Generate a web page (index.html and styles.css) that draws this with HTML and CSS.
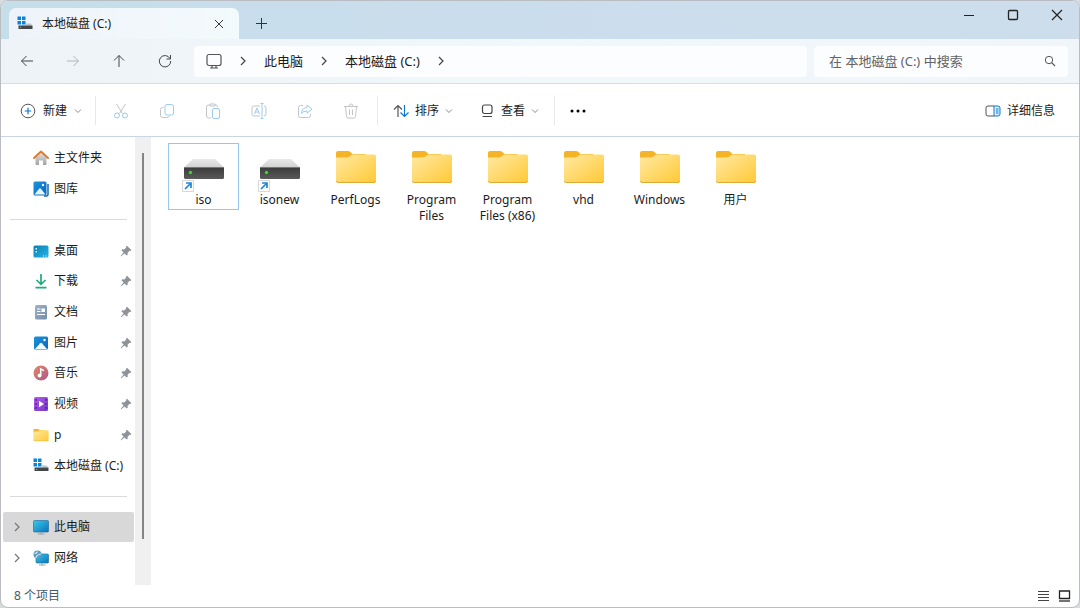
FILE: index.html
```html
<!DOCTYPE html>
<html lang="zh-CN">
<head>
<meta charset="utf-8">
<meta name="viewport" content="width=device-width, initial-scale=1">
<title>本地磁盘 (C:)</title>
<link rel="stylesheet" href="styles.css">
</head>
<body>
<svg class="sprite" aria-hidden="true">
  <defs>
    <linearGradient id="g-folder" x1="0" y1="0" x2="1" y2="1"><stop offset="0" stop-color="#ffe9a3"/><stop offset="1" stop-color="#ffc935"/></linearGradient>
    <linearGradient id="g-drive" x1="0" y1="0" x2="0" y2="1"><stop offset="0" stop-color="#3a3a3a"/><stop offset="1" stop-color="#5a5a5a"/></linearGradient>
    <linearGradient id="g-top" x1="0" y1="0" x2="0" y2="1"><stop offset="0" stop-color="#e8e8e8"/><stop offset="1" stop-color="#d2d2d2"/></linearGradient>
    <linearGradient id="g-blue" x1="0" y1="0" x2="1" y2="1"><stop offset="0" stop-color="#1b93dd"/><stop offset="1" stop-color="#0a66bb"/></linearGradient>
    <linearGradient id="g-cyan" x1="0" y1="0" x2="1" y2="1"><stop offset="0" stop-color="#35cbe8"/><stop offset="1" stop-color="#0d72bd"/></linearGradient>
    <linearGradient id="g-desk" x1="0" y1="0" x2="1" y2="1"><stop offset="0" stop-color="#0a7fb5"/><stop offset="1" stop-color="#27b5e2"/></linearGradient>
    <linearGradient id="g-doc" x1="0" y1="0" x2="1" y2="1"><stop offset="0" stop-color="#a0b3ca"/><stop offset="1" stop-color="#718cab"/></linearGradient>
    <linearGradient id="g-music" x1="0" y1="0" x2="1" y2="1"><stop offset="0" stop-color="#e58a62"/><stop offset="1" stop-color="#a8578e"/></linearGradient>
    <linearGradient id="g-video" x1="0" y1="0" x2="1" y2="1"><stop offset="0" stop-color="#b05ce8"/><stop offset="1" stop-color="#7438c9"/></linearGradient>
    <linearGradient id="g-house" x1="0" y1="0" x2="0" y2="1"><stop offset="0" stop-color="#e3e3e3"/><stop offset="1" stop-color="#a3a3a3"/></linearGradient>
  </defs>
  <symbol id="chevron" viewBox="0 0 8 10"><path d="M2 1l4 4-4 4" fill="none" stroke="currentColor" stroke-width="1.2"/></symbol>
  <symbol id="down" viewBox="0 0 8 6"><path d="M1 1.5l3 3 3-3" fill="none" stroke="#8a8a8a"/></symbol>
  <symbol id="pin" viewBox="0 0 12 12"><path d="M7 .8l4.300 4.300-.8.8-.9-.1-2 2 .1 1.900-1 .9-2.200-2.200L1.200 11.200l-.5.1.1-.6 2.800-3.200-2.200-2.200.9-1 1.900.1 2-2-.1-.9z" fill="#8e9299"/></symbol>
  <symbol id="folder" viewBox="0 0 42 34"><path d="M1 12V3q0-2 2-2h10q1.500 0 2.500 1l2 2H30v8z" fill="#f4b426"/><path d="M1 7.500h10.500q2 0 3-1L17 4.500h22q2 0 2 2V31q0 2-2 2H3q-2 0-2-2z" fill="url(#g-folder)"/><path d="M1.500 31q.3 1.500 1.700 1.500h35.600q1.400 0 1.700-1.500" fill="none" stroke="#e0ab35"/></symbol>
  <symbol id="disk" viewBox="0 0 16 14"><path d="M.5.5H4V4H.5zM5 .5h3.500V4H5zM.5 5H4v3.500H.5zM5 5h3.500v3.500H5z" fill="#0a84d8"/><path d="M9 7.500h4.500l2 2H4V9.200h5z" fill="#c0c4c6"/><path d="M1.500 9.500h14V13h-14z" fill="#42474a"/><path d="M3 11h1.200v1H3z" fill="#45d45b"/></symbol>
  <symbol id="drive" viewBox="0 0 42 34"><path d="M10 1h22l9 8.500H1z" fill="url(#g-top)"/><path d="M1 9h40v10.500q0 1.500-1.500 1.500h-37Q1 21 1 19.500z" fill="url(#g-drive)"/><path d="M1 9.500h40" stroke="#777"/><circle cx="7.500" cy="14.500" r="1.700" fill="#36d72f"/></symbol>
  <symbol id="shortcut" viewBox="0 0 12 12"><path d="M.5.5h11v11H.5z" fill="#fff" stroke="#d8d8d8"/><path d="M3 9l5-5M4 3h5v5" fill="none" stroke="#2086d6" stroke-width="1.700"/></symbol>
</svg>

<main class="window">
  <header class="titlebar">
    <div class="tab">
      <svg class="i16" viewBox="0 0 16 16"><use href="#disk" width="16" height="14"/></svg>
      <span class="tab-name">本地磁盘 (C:)</span>
      <button class="tab-close" aria-label="关闭标签页"><svg width="10" height="10" viewBox="0 0 10 10"><path d="M1 1l8 8M9 1L1 9" stroke="#333"/></svg></button>
    </div>
    <button class="tab-add" aria-label="新标签页"><svg width="11" height="11" viewBox="0 0 11 11"><path d="M5.500 0v11M0 5.500h11" stroke="#333"/></svg></button>
    <div class="captions">
      <button aria-label="最小化"><svg width="12" height="12" viewBox="0 0 12 12"><path d="M1 6.500h10" stroke="#222" stroke-width="1.200"/></svg></button>
      <button aria-label="最大化"><svg width="12" height="12" viewBox="0 0 12 12"><rect x="1.500" y="1.500" width="9" height="9" rx="1" fill="none" stroke="#222" stroke-width="1.300"/></svg></button>
      <button aria-label="关闭"><svg width="12" height="12" viewBox="0 0 12 12"><path d="M1 1l10 10M11 1L1 11" stroke="#222" stroke-width="1.200"/></svg></button>
    </div>
  </header>

  <nav class="navbar" aria-label="地址">
    <div class="history">
      <button aria-label="后退"><svg class="line" viewBox="0 0 14 14"><path d="M13 7H1.500M6.500 2l-5 5 5 5"/></svg></button>
      <button aria-label="前进" disabled><svg class="line pale" viewBox="0 0 14 14"><path d="M1 7h11.500M7.500 2l5 5-5 5"/></svg></button>
      <button aria-label="上移"><svg class="line" viewBox="0 0 14 14"><path d="M7 13V1.500M2 6.500l5-5 5 5"/></svg></button>
      <button aria-label="刷新"><svg class="line" viewBox="0 0 14 14"><path d="M12 4.500A5.700 5.700 0 1 0 12.700 7M12.500 1v4H8.500"/></svg></button>
    </div>
    <div class="address">
      <svg class="pc" viewBox="0 0 16 16"><rect x="1" y="1.500" width="14" height="11" rx="2"/><path d="M6 12.500v2.500M10 12.500v2.500M4 15h8"/></svg>
      <svg class="chev"><use href="#chevron"/></svg>
      <a href="#pc">此电脑</a>
      <svg class="chev"><use href="#chevron"/></svg>
      <a href="#c">本地磁盘 (C:)</a>
      <svg class="chev"><use href="#chevron"/></svg>
    </div>
    <div class="search">
      <input type="text" aria-label="搜索" placeholder="在 本地磁盘 (C:) 中搜索">
      <svg width="12" height="12" viewBox="0 0 12 12"><circle cx="5" cy="5" r="3.700" fill="none" stroke="#555"/><path d="M7.700 7.700l3.300 3.300" stroke="#555" stroke-width="1.200"/></svg>
    </div>
  </nav>

  <div class="toolbar" role="toolbar">
    <button class="cmd cmd-new"><svg class="i16" viewBox="0 0 16 16"><circle cx="8" cy="8" r="6.800" fill="none" stroke="#555"/><path d="M8 4.700v6.600M4.700 8h6.600" stroke="#0a78d0" stroke-width="1.200"/></svg>新建<svg class="down"><use href="#down"/></svg></button>
    <span class="rule"></span>
    <div class="tools">
      <button class="tool" aria-label="剪切" disabled><svg viewBox="0 0 16 16"><path class="gr" d="M3.500 1l6 9.500M12.500 1l-6 9.500"/><circle class="bl" cx="4" cy="12.500" r="2.500"/><circle class="bl" cx="12" cy="12.500" r="2.500"/></svg></button>
      <button class="tool" aria-label="复制" disabled><svg viewBox="0 0 16 16"><path class="gr" d="M4.500 4.500H3.500q-2 0-2 2v6q0 2 2 2h4.500q2 0 2.500-1.500"/><rect class="bl" x="6" y="1.500" width="8.500" height="10.500" rx="2"/></svg></button>
      <button class="tool" aria-label="粘贴" disabled><svg viewBox="0 0 16 16"><path class="gr" d="M6 15H3.500q-2 0-2-2V4q0-2 2-2H5M10 2h1q1.500 0 1.800 2M5 1h5v2H5z"/><rect class="bl" x="7.500" y="5.500" width="7" height="10" rx="1.500"/></svg></button>
      <button class="tool" aria-label="重命名" disabled><svg viewBox="0 0 16 16"><path class="gr" d="M9 13H3q-2 0-2-2V5q0-2 2-2h6M13 3q2 0 2 2v6q0 2-2 2"/><path class="bl" d="M11 1v14M9.500.5h3M9.500 15.500h3M3.500 11L6 5l2.500 6M4.300 9h3.400"/></svg></button>
      <button class="tool" aria-label="共享" disabled><svg viewBox="0 0 16 16"><path class="gr" d="M6 2.500H3.500q-2 0-2 2v8q0 2 2 2h8q2 0 2-2V11"/><path class="bl" d="M10 2l5 4.200-5 4V8Q6 8 4.500 10.500 5 4.700 10 4.500z"/></svg></button>
      <button class="tool" aria-label="删除" disabled><svg viewBox="0 0 16 16"><path class="gr" d="M1 3.500h14M6 3.500q0-2.500 2-2.500t2 2.500M2.500 3.500l1 10q.2 1.500 1.500 1.500h6q1.300 0 1.500-1.500l1-10M6.500 6.500v5.500M9.500 6.500v5.500"/></svg></button>
    </div>
    <span class="rule"></span>
    <button class="cmd cmd-sort"><svg class="i16" viewBox="0 0 16 16"><path d="M5 14V2.500M1 6.500l4-4 4 4" fill="none" stroke="#555" stroke-width="1.200"/><path d="M11.500 2v11.500M7.500 9.500l4 4 4-4" fill="none" stroke="#0a78d0" stroke-width="1.200"/></svg>排序<svg class="down"><use href="#down"/></svg></button>
    <button class="cmd cmd-view"><svg class="i16" viewBox="0 0 16 16"><rect x="3.500" y="2" width="9.500" height="8.500" rx="2" fill="none" stroke="#444" stroke-width="1.200"/><path d="M3.500 13.500h9.500" stroke="#444" stroke-width="1.200"/></svg>查看<svg class="down"><use href="#down"/></svg></button>
    <span class="rule"></span>
    <button class="more" aria-label="更多"><svg width="16" height="4" viewBox="0 0 16 4"><circle cx="2" cy="2" r="1.500"/><circle cx="8" cy="2" r="1.500"/><circle cx="14" cy="2" r="1.500"/></svg></button>
    <button class="cmd cmd-details"><svg class="i16" viewBox="0 0 16 16"><path d="M9 3H3Q1 3 1 5v6q0 2 2 2h6" fill="none" stroke="#555"/><path d="M9 3h4q2 0 2 2v6q0 2-2 2H9z" fill="#dceeff" stroke="#0a78d0"/><path d="M11 6h2.500M11 8h2.500M11 10h2.500" stroke="#0a78d0"/></svg>详细信息</button>
  </div>

  <section class="body">
    <nav class="side" aria-label="导航窗格">
      <a class="row" href="#home"><svg class="i16" viewBox="0 0 16 16"><path d="M2.500 7L8 2l5.500 5v7q0 1-1 1H10v-4.500H6V15H3.500q-1 0-1-1z" fill="url(#g-house)"/><path d="M1 8l7-6.500L15 8" fill="none" stroke="#e07b2b" stroke-width="1.900" stroke-linejoin="round" stroke-linecap="round"/></svg><span>主文件夹</span></a>
      <a class="row" href="#gallery"><svg class="i16" viewBox="0 0 16 16"><path d="M15 3v10.500q0 1.500-1.500 1.500H11" fill="none" stroke="#1469ae" stroke-width="1.500"/><rect x=".5" y=".5" width="13" height="14" rx="1.500" fill="url(#g-blue)"/><path d="M1.500 13.500l4.800-6q.7-.7 1.400 0l4.800 6z" fill="#e9f6ff"/><circle cx="10" cy="4" r="1.200" fill="#fff"/></svg><span>图库</span></a>
      <div class="split"></div>
      <a class="row" href="#desktop"><svg class="i16" viewBox="0 0 16 16"><rect x=".5" y="2.500" width="15" height="12" rx="1.500" fill="url(#g-desk)"/><path d="M2.500 5H4v1.500H2.500zM2.500 8H4v1.500H2.500zM10 12.500h1v1h-1zM12.500 12.500h1v1h-1z" fill="#d8f6ff"/></svg><span>桌面</span><svg class="pin"><use href="#pin"/></svg></a>
      <a class="row" href="#downloads"><svg class="i16" viewBox="0 0 16 16"><path d="M8 1v10M3.500 7L8 11.300 12.500 7M2.500 14.700h11" fill="none" stroke="#1faa7e" stroke-width="1.700"/></svg><span>下载</span><svg class="pin"><use href="#pin"/></svg></a>
      <a class="row" href="#documents"><svg class="i16" viewBox="0 0 16 16"><rect x="2" y="1" width="12" height="14.500" rx="1.500" fill="url(#g-doc)"/><path d="M4 5h3.500M4 7.500h3.500M4 10.500h8" stroke="#fff" stroke-width="1.200"/><path d="M8.500 4.500h3.500V8H8.500z" fill="#fff"/></svg><span>文档</span><svg class="pin"><use href="#pin"/></svg></a>
      <a class="row" href="#pictures"><svg class="i16" viewBox="0 0 16 16"><rect x="1" y="1.500" width="14" height="13" rx="1.500" fill="url(#g-blue)"/><path d="M2 14l5.200-5.800q.8-.7 1.600 0L14 14z" fill="#f1f9ff"/><circle cx="11.500" cy="5" r="1.200" fill="#fff"/></svg><span>图片</span><svg class="pin"><use href="#pin"/></svg></a>
      <a class="row" href="#music"><svg class="i16" viewBox="0 0 16 16"><circle cx="8" cy="8" r="7.500" fill="url(#g-music)"/><circle cx="6.500" cy="10.500" r="1.900" fill="#fff"/><path d="M7.700 10.500V4l3.300 1.700" fill="none" stroke="#fff" stroke-width="1.500"/></svg><span>音乐</span><svg class="pin"><use href="#pin"/></svg></a>
      <a class="row" href="#videos"><svg class="i16" viewBox="0 0 16 16"><rect x="1" y="1" width="14" height="14" rx="1.500" fill="url(#g-video)"/><path d="M2.300 3h1.500v1.700H2.300zM2.300 7h1.500v1.700H2.300zM2.300 11h1.500v1.700H2.300zM12.200 3h1.500v1.700h-1.500zM12.200 7h1.500v1.700h-1.500zM12.200 11h1.500v1.700h-1.500z" fill="#4c2192"/><path d="M6 4.700L11 8l-5 3.300z" fill="#fff"/></svg><span>视频</span><svg class="pin"><use href="#pin"/></svg></a>
      <a class="row" href="#p"><svg class="i16"><use href="#folder"/></svg><span>p</span><svg class="pin"><use href="#pin"/></svg></a>
      <a class="row" href="#disk-c"><svg class="i16" viewBox="0 0 16 16"><use href="#disk" width="16" height="14"/></svg><span>本地磁盘 (C:)</span></a>
      <div class="split"></div>
      <a class="row tree current" href="#this-pc"><svg class="chev"><use href="#chevron"/></svg><svg class="i16" viewBox="0 0 16 16"><rect x=".5" y="1.500" width="15" height="11.500" rx="1" fill="url(#g-cyan)" stroke="#1a6597" stroke-width=".6"/><path d="M8 13v2M4.500 15h7" stroke="#8fa0aa"/></svg><span>此电脑</span></a>
      <a class="row tree" href="#network"><svg class="chev"><use href="#chevron"/></svg><svg class="i16" viewBox="0 0 16 16"><rect x="3" y="4" width="12.500" height="9" rx="1" fill="url(#g-cyan)" stroke="#1a6597" stroke-width=".6"/><path d="M9 13v2M6 15h6.500" stroke="#8fa0aa"/><circle cx="4.500" cy="4.500" r="4" fill="#5d9dc4"/><path d="M1.500 3q2 1 3-1.500M3 8q0-3 5-4" fill="none" stroke="#c4e8f7" stroke-width="1.200"/></svg><span>网络</span></a>
    </nav>
    <div class="scroll"><div class="thumb"></div></div>
    <div class="files">
      <button class="file selected"><span class="art"><svg class="big low"><use href="#drive"/></svg><svg class="badge"><use href="#shortcut"/></svg></span>iso</button>
      <button class="file"><span class="art"><svg class="big low"><use href="#drive"/></svg><svg class="badge"><use href="#shortcut"/></svg></span>isonew</button>
      <button class="file"><span class="art"><svg class="big"><use href="#folder"/></svg></span>PerfLogs</button>
      <button class="file"><span class="art"><svg class="big"><use href="#folder"/></svg></span>Program Files</button>
      <button class="file"><span class="art"><svg class="big"><use href="#folder"/></svg></span>Program Files (x86)</button>
      <button class="file"><span class="art"><svg class="big"><use href="#folder"/></svg></span>vhd</button>
      <button class="file"><span class="art"><svg class="big"><use href="#folder"/></svg></span>Windows</button>
      <button class="file"><span class="art"><svg class="big"><use href="#folder"/></svg></span>用户</button>
    </div>
  </section>

  <footer class="status">
    <span>8 个项目</span>
    <div class="modes">
      <button aria-label="详细信息视图"><svg width="13" height="12" viewBox="0 0 13 12"><path d="M1 1.500h11M1 4.500h11M1 7.500h11M1 10.500h11" stroke="#444"/></svg></button>
      <button aria-label="大图标视图"><svg width="13" height="12" viewBox="0 0 13 12"><path d="M1.500 1h10v7.500h-10z" fill="none" stroke="#222" stroke-width="1.300"/><path d="M1 11h11" stroke="#444" stroke-width="1.500"/></svg></button>
    </div>
  </footer>
</main>
</body>
</html>
```
FILE: styles.css
```css
* { box-sizing: border-box; }

body {
  margin: 0;
  background: #d9dcdf;
  color: #1b1b1b;
  font: 12px/16px "Noto Sans", "Noto Sans CJK SC", sans-serif;
}

button {
  display: flex;
  align-items: center;
  justify-content: center;
  margin: 0;
  padding: 0;
  border: 0;
  background: none;
  color: inherit;
  font: inherit;
}

a { color: inherit; text-decoration: none; }
svg { flex: none; }

.sprite { position: absolute; width: 0; height: 0; }
.i16 { width: 16px; height: 16px; }
.chev { width: 8px; height: 10px; color: #444; }
.down { width: 8px; height: 6px; }

.window {
  display: flex;
  flex-direction: column;
  min-height: 100vh;
  overflow: hidden;
  border: 1px solid #b9bdc1;
  border-radius: 8px;
  background: #fff;
}

/* Title bar */
.titlebar {
  display: flex;
  height: 38px;
  padding: 7px 0 0 8px;
  background: linear-gradient(90deg, #c5deea, #ccdded 60%, #cdddec);
}
.tab {
  display: flex;
  align-items: center;
  width: 230px;
  padding: 0 8px;
  border-radius: 7px 7px 0 0;
  background: linear-gradient(90deg, #eef3f9, #f3fafc);
}
.tab-name { flex: 1; padding-left: 9px; }
.tab-close { width: 24px; height: 24px; }
.tab-add { width: 44px; }
.captions { display: flex; margin: -7px 0 0 auto; }
.captions button { width: 44px; height: 28px; }

/* Address row */
.navbar {
  display: flex;
  align-items: center;
  height: 45px;
  padding: 0 11px 0 3px;
  border-bottom: 1px solid #d5dee4;
  background: linear-gradient(90deg, #eef3f8, #f0f8fa 50%, #f0f5fa);
}
.history { display: flex; }
.history button { width: 46px; height: 32px; }
.line { width: 14px; height: 14px; fill: none; stroke: #444; }
.pale { stroke: #b0b4b8; }
.address, .search {
  display: flex;
  align-items: center;
  height: 31px;
  border-radius: 4px;
  background: #fbfdfe;
  font-size: 13px;
}
.address {
  flex: 1;
  gap: 17px;
  margin: 0 7px 0 6px;
  padding: 0 12px;
}
.pc { width: 16px; height: 16px; fill: none; stroke: #555; stroke-width: 1.2; }
.search { width: 254px; padding: 0 12px 0 15px; }
.search input {
  flex: 1;
  min-width: 0;
  padding: 0;
  border: 0;
  outline: 0;
  background: none;
  color: #333;
  font: inherit;
}
.search input::placeholder { color: #606468; opacity: 1; }

/* Command bar */
.toolbar {
  display: flex;
  align-items: center;
  height: 53px;
  padding: 1px 24px 0 19px;
  border-bottom: 1px solid #cbd5df;
}
.rule { width: 1px; height: 29px; background: #e6e8ea; }
.cmd { height: 32px; gap: 6px; }
.cmd-new { gap: 7px; margin-right: 13px; }
.tools { display: flex; margin: 0 3px 0 2px; }
.tool { width: 46px; height: 32px; }
.tool svg { width: 16px; height: 16px; fill: none; }
.gr { stroke: #c2c5c8; }
.bl { stroke: #9bcbee; }
.cmd-sort { margin-left: 15px; }
.cmd-view { margin: 0 15px 0 26px; }
.more { width: 46px; height: 32px; }
.cmd-details { margin-left: auto; }

/* Body */
.body { display: flex; flex: 1; }
.side {
  display: flex;
  flex-direction: column;
  width: 134px;
  padding: 6px 1px 12px 2px;
}
.row {
  display: flex;
  flex: 1;
  align-items: center;
  gap: 5px;
  min-height: 24px;
  padding: 0 2px 0 30px;
  border-radius: 2px;
  white-space: nowrap;
}
.row .pin { width: 12px; height: 12px; margin-left: auto; }
.tree { padding-left: 10px; }
.tree .chev { margin-right: 7px; color: #777; }
.current { background: #d8d8d8; }
.split { display: flex; flex: 1; align-items: center; padding: 0 7px; }
.split::before { content: ""; flex: 1; height: 1px; background: #d9dadb; }
.scroll { width: 16px; padding: 16px 7px 46px; background: #f0f0f0; }
.thumb { width: 2px; height: 100%; background: #858585; }

.files {
  display: flex;
  flex: 1;
  flex-wrap: wrap;
  align-items: flex-start;
  align-content: flex-start;
  gap: 5px;
  padding: 6px 17px;
}
.file {
  flex-direction: column;
  width: 71px;
  padding: 6px 4px 1px;
  border: 1px solid transparent;
}
.file.selected { border-color: #93c9f0; }
.art {
  position: relative;
  display: flex;
  align-items: flex-start;
  justify-content: center;
  width: 42px;
  height: 42px;
}
.big { width: 42px; height: 34px; }
.low { margin-top: 8px; }
.badge { position: absolute; left: -1px; bottom: 0; width: 12px; height: 12px; }

/* Status bar */
.status {
  display: flex;
  align-items: center;
  justify-content: space-between;
  height: 22px;
  padding: 0 8px 0 13px;
  color: #44586e;
}
.modes { display: flex; gap: 8px; }
```
